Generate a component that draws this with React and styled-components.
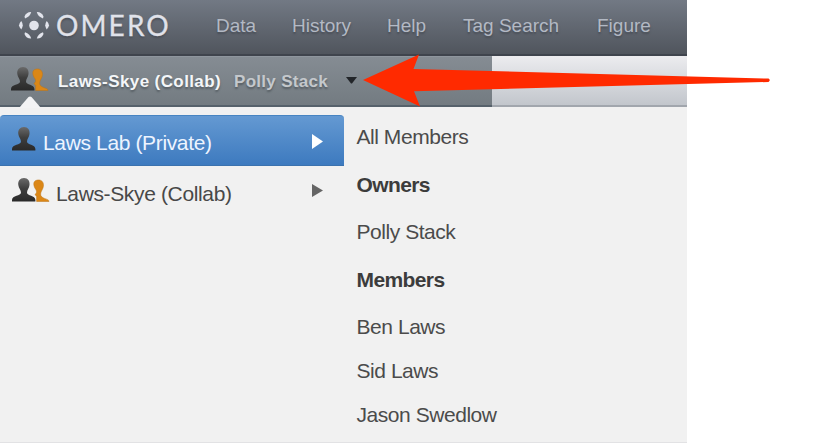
import React from 'react';
import styled, { createGlobalStyle } from 'styled-components';

const Global = createGlobalStyle`
  * { box-sizing: border-box; }
  body { margin: 0; background: #fff; font-family: "Liberation Sans", Arial, sans-serif; }
`;

const Page = styled.div`
  position: relative;
  width: 829px;
  height: 445px;
  overflow: hidden;
`;
const Window = styled.div`
  display: flex;
  flex-direction: column;
  width: 687px;
  height: 443px;
  background: #f1f1f1;
  border-bottom: 1px solid #e2e2e4;
`;
const NavBar = styled.header`
  display: flex;
  align-items: center;
  flex: none;
  height: 56px;
  padding: 0 0 4px 18px;
  background: linear-gradient(#727984, #50555d);
  border-bottom: 2px solid #3f444d;
`;
const Brand = styled.div`
  display: flex;
  align-items: center;
  width: 198px;
  color: #e0e2ea;
  font: 400 28px/36px Lato, sans-serif;
  letter-spacing: 2.1px;
  -webkit-text-stroke: 0.3px #e0e2ea;
  text-shadow: 0 2px 2px #4a4f58;
`;
const Mark = styled.svg`
  flex: none;
  width: 32px;
  height: 30px;
  margin-right: 6px;
`;
const NavLink = styled.a`
  flex: none;
  width: ${p => p.$width}px;
  padding-top: 2px;
  color: #b3b9c4;
  font-size: 19px;
  line-height: 24px;
  white-space: nowrap;
  text-shadow: 0 2px 2px #484d56;
`;
const SubBar = styled.div`
  display: flex;
  flex: none;
  height: 51px;
  background: linear-gradient(#ececef, #c2c6cc);
  border-bottom: 2px solid #a1a6ad;
`;
const GroupPicker = styled.div`
  position: relative;
  display: flex;
  align-items: center;
  width: 492px;
  height: 51px;
  padding: 0 0 1px 11px;
  background: linear-gradient(#858c93, #737b81);
  border-top: 1px solid #8f969e;
  border-bottom: 2px solid #56616b;
`;
const Pointer = styled.svg`
  position: absolute;
  left: 19px;
  bottom: -3px;
  width: 22px;
  height: 12px;
`;
const People = styled.svg`
  flex: none;
  width: ${p => p.$width}px;
  height: 26px;
  margin-bottom: ${p => p.$lift}px;
  overflow: visible;
`;
const Current = styled.span`
  width: ${p => p.$width}px;
  padding-top: 2px;
  color: ${p => p.$color};
  font-size: 17px;
  font-weight: bold;
  letter-spacing: ${p => p.$spacing}px;
  white-space: nowrap;
  text-shadow: 0 2px 2px #555c62;
`;
const Triangle = styled.svg`
  flex: none;
  width: ${p => p.$w}px;
  height: ${p => p.$h}px;
  margin-bottom: ${p => p.$lift || 0}px;
`;
const Menu = styled.div`
  display: flex;
  flex: 1;
  padding-top: 8px;
`;
const Groups = styled.div`
  width: 344px;
`;
const GroupRow = styled.div`
  display: flex;
  align-items: center;
  height: 51px;
  padding: 3px 21px 0 12px;
  font-size: 21px;
  color: ${p => (p.$active ? '#edf4ff' : '#484848')};
  background: ${p => (p.$active ? 'linear-gradient(#6499d2, #3d7abf)' : 'none')};
  border-top: 1px solid ${p => (p.$active ? '#4784c2' : 'transparent')};
  border-bottom: 1px solid ${p => (p.$active ? '#3b72ae' : 'transparent')};
  border-radius: 4px 4px 0 0;
`;
const GroupName = styled.span`
  flex: 1;
  padding-top: 2px;
  letter-spacing: ${p => p.$spacing}px;
  white-space: nowrap;
`;
const Members = styled.div`
  display: flex;
  flex-direction: column;
  padding-left: 12.5px;
`;
const Member = styled.div`
  height: ${p => p.$height}px;
  color: ${p => (p.$heading ? '#3c3c3c' : '#4b4b4b')};
  font-size: 21px;
  font-weight: ${p => (p.$heading ? 'bold' : 'normal')};
  line-height: 43px;
  letter-spacing: ${p => (p.$heading ? -0.6 : -0.45)}px;
  white-space: nowrap;
`;
const Arrow = styled.svg`
  position: absolute;
  left: 0;
  top: 0;
  width: 829px;
  height: 120px;
  pointer-events: none;
`;

const Logo = () => (
  <Mark viewBox="0 0 32 30" fill="#e2e4ec">
    <circle cx="16" cy="15.5" r="4.8" />
    <path d="M3.3 11Q6.2 15.3 3.3 19.6Q-1.2 15.3 3.3 11Z" />
    <path d="M28.7 11Q25.8 15.3 28.7 19.6Q33.2 15.3 28.7 11Z" />
    <path d="M6.5 6.5Q8.3 1.8 13.2 2Q12.2 6.6 7 8.4Z" />
    <path d="M25.5 6.5Q23.7 1.8 18.8 2Q19.8 6.6 25 8.4Z" />
    <path d="M6.5 24Q8.3 28.7 13.2 28.5Q12.2 24 7 22.2Z" />
    <path d="M25.5 24Q23.7 28.7 18.8 28.5Q19.8 24 25 22.2Z" />
  </Mark>
);

const PeopleIcon = ({ id, pair, width, lift }) => (
  <People viewBox={`0 0 ${width} 26`} $width={width} $lift={lift}>
    <defs>
      <linearGradient id={id} x2="0" y2="1">
        <stop stopColor="#6a6a6a" />
        <stop offset=".45" stopColor="#3e3e3e" />
        <stop offset="1" stopColor="#292929" />
      </linearGradient>
    </defs>
    {pair && (
      <path
        d="M25.5 3C29.5 2.5 31.6 5 31.5 8.5C31.4 12 28.6 14.3 28.6 17C28.6 19.6 30.5 20.6 32.5 21.4C35 22.4 37 22.6 37 24.5H24.6V19.5L23 17.5C24.8 16.4 25 14.6 24 12.8C21.6 9.6 20 3.8 25.5 3Z"
        fill="#db8717"
        stroke="#bd7417"
        strokeWidth=".5"
      />
    )}
    <path
      d="M12 1C16 1 18 4 17.5 8C17.2 11.2 15 13.2 15 15.6C15 19.4 23.4 18.3 23.4 23V24.5H0V23C0 18.3 9 19.4 9 15.6C9 13.2 6.7 11.2 6.3 8C5.8 4 8 1 12 1Z"
      fill={`url(#${id})`}
    />
  </People>
);

const NAV = [
  { label: 'Data', width: 76 },
  { label: 'History', width: 95 },
  { label: 'Help', width: 76 },
  { label: 'Tag Search', width: 134 },
  { label: 'Figure', width: 70 },
];

const MEMBERS = [
  { name: 'All Members', height: 48 },
  { name: 'Owners', height: 47, heading: true },
  { name: 'Polly Stack', height: 48 },
  { name: 'Members', height: 47, heading: true },
  { name: 'Ben Laws', height: 44 },
  { name: 'Sid Laws', height: 44 },
  { name: 'Jason Swedlow', height: 44 },
];

export default function App() {
  return (
    <Page>
      <Global />
      <Window>
        <NavBar>
          <Brand><Logo />OMERO</Brand>
          {NAV.map(n => <NavLink key={n.label} $width={n.width}>{n.label}</NavLink>)}
        </NavBar>
        <SubBar>
          <GroupPicker>
            <PeopleIcon id="current" pair width={47} lift={3} />
            <Current $width={176} $color="#f4f6f8" $spacing={0.4}>Laws-Skye (Collab)</Current>
            <Current $width={112} $color="#c4c8cc" $spacing={0.3}>Polly Stack</Current>
            <Triangle viewBox="0 0 11 7" $w={11} $h={7}><path d="M0 0H11L6 6.5H5Z" fill="#222529" /></Triangle>
            <Pointer viewBox="0 0 22 12"><path d="M0 12L9.5 1Q11 0 12.5 1L22 12Z" fill="#f3f3f4" /></Pointer>
          </GroupPicker>
        </SubBar>
        <Menu>
          <Groups>
            <GroupRow $active>
              <PeopleIcon id="private" width={31} lift={7} />
              <GroupName $spacing={-0.36}>Laws Lab (Private)</GroupName>
              <Triangle viewBox="0 0 11 15" $w={11} $h={15} $lift={2}><path d="M0 0L11 7.5L0 15Z" fill="#fff" /></Triangle>
            </GroupRow>
            <GroupRow>
              <PeopleIcon id="collab" pair width={44} lift={6} />
              <GroupName $spacing={-0.36}>Laws-Skye (Collab)</GroupName>
              <Triangle viewBox="0 0 11 13" $w={11} $h={13} $lift={5}><path d="M0 0L11 6.5L0 13Z" fill="#656565" /></Triangle>
            </GroupRow>
          </Groups>
          <Members>
            {MEMBERS.map(m => (
              <Member key={m.name} $height={m.height} $heading={m.heading}>{m.name}</Member>
            ))}
          </Members>
        </Menu>
      </Window>
      <Arrow viewBox="0 0 829 120">
        <path d="M363 80L419 54.5L413.5 69L768.5 78.6Q771 80.3 768.5 82L414 91.2L420 106.5Z" fill="#ff2a00" />
      </Arrow>
    </Page>
  );
}
